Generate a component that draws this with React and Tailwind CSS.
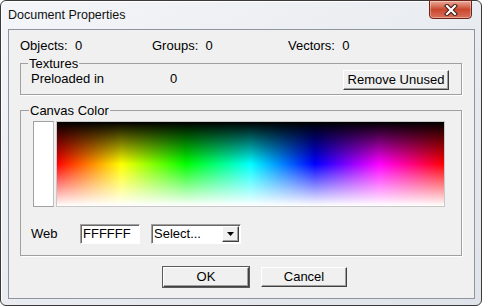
import React from "react";

const raised =
  "border border-t-white border-l-white border-r-[#404040] border-b-[#404040] shadow-[inset_-1px_-1px_0_#a0a0a0] bg-[#f0f0f0]";
const sunken =
  "border border-t-[#a0a0a0] border-l-[#a0a0a0] border-r-white border-b-white shadow-[inset_1px_1px_0_#696969] bg-white";

function Btn({ children, className = "" }) {
  return (
    <div className={`${raised} h-[20px] flex items-center justify-center ${className}`}>
      {children}
    </div>
  );
}

export default function App() {
  return (
    <div
      className="w-[482px] h-[306px] bg-white text-[13px] text-black"
      style={{ fontFamily: '"Liberation Sans", Arial, sans-serif' }}
    >
      <div className="w-[482px] h-[306px] rounded-[6px] border border-[#3a3a3a] bg-gradient-to-br from-[#f4f6f9] via-[#e9ecf0] to-[#dfe4ea] flex flex-col shadow-[inset_1px_1px_0_#ffffff]">
        {/* title bar */}
        <div className="h-[28px] flex items-start justify-between pl-[7px] pr-[9px]">
          <div className="pt-[7px] text-[12.5px] leading-[15px] text-[#111]">Document Properties</div>
          <div className="w-[43px] h-[19px] mt-[-1px] rounded-b-[4px] border border-[#6b2418] bg-gradient-to-b from-[#e9a99a] via-[#c9472d] to-[#d9705a] flex items-center justify-center shadow-[inset_0_0_0_1px_rgba(255,255,255,0.35)]">
            <svg width="14" height="12" viewBox="0 0 14 12">
              <path d="M3 2 L11 10 M11 2 L3 10" stroke="#3b1a14" strokeWidth="4.2" strokeLinecap="square" />
              <path d="M3 2 L11 10 M11 2 L3 10" stroke="#ffffff" strokeWidth="2.2" strokeLinecap="square" />
            </svg>
          </div>
        </div>

        {/* client area */}
        <div className="ml-[7px] mr-[6px] h-[270px] border border-[#8e959e] bg-[#f0f0f0] pl-[11px] pr-[12px] pt-[8px] flex flex-col">
          <div className="flex leading-[15px] h-[15px]">
            <div className="w-[132px]">Objects:&nbsp; 0</div>
            <div className="w-[136px]">Groups:&nbsp; 0</div>
            <div>Vectors:&nbsp; 0</div>
          </div>

          <fieldset className="mt-[4px] border border-[#a0a0a0] shadow-[1px_1px_0_#ffffff] pb-[4px] pl-[10px] pr-[12px]">
            <legend className="ml-[-3px] px-[1px] leading-[13px]">Textures</legend>
            <div className="flex items-center h-[20px]">
              <div className="w-[139px] mt-[-3px]">Preloaded in</div>
              <div className="mt-[-3px]">0</div>
              <div className="flex-1" />
              <Btn className="w-[106px]">Remove Unused</Btn>
            </div>
          </fieldset>

          <fieldset className="mt-[9px] border border-[#a0a0a0] shadow-[1px_1px_0_#ffffff] pt-[4px] pb-[11px] pl-[12px] pr-[16px]">
            <legend className="ml-[-4px] px-[1px] leading-[13px]">Canvas Color</legend>
            <div className="flex h-[86px] gap-[2px]">
              <div className="w-[21px] h-full bg-white border border-[#a0a0a0] border-r-[#c0c0c0]" />
              <div className="flex-1 h-full border border-[#c8c8c8] p-0">
                <div className="w-full h-full bg-[linear-gradient(to_right,#ff0000,#ffff00,#00ff00,#00ffff,#0000ff,#ff00ff,#ff0000)]">
                  <div className="w-full h-full bg-[linear-gradient(to_bottom,#000000,rgba(0,0,0,0)_50%,rgba(255,255,255,0)_50%,#ffffff)]" />
                </div>
              </div>
            </div>
            <div className="mt-[17px] flex items-center h-[20px]">
              <div className="ml-[-2px] w-[49px]">Web</div>
              <div className={`${sunken} w-[60px] h-[20px] pl-[2px] leading-[18px]`}>FFFFFF</div>
              <div className={`${sunken} ml-[11px] w-[90px] h-[20px] pl-[2px] flex items-center justify-between pr-[1px]`}>
                <span className="leading-[18px]">Select...</span>
                <div className={`${raised} w-[17px] h-[16px] flex items-center justify-center`}>
                  <svg width="7" height="4" viewBox="0 0 7 4">
                    <path d="M0 0 H7 L3.5 4 Z" fill="#000" />
                  </svg>
                </div>
              </div>
            </div>
          </fieldset>

          <div className="mt-[11px] flex gap-[12px] pl-[143px]">
            <Btn className="w-[86px] outline outline-1 outline-[#5a5a5a]">OK</Btn>
            <Btn className="w-[86px]">Cancel</Btn>
          </div>
        </div>
      </div>
    </div>
  );
}
